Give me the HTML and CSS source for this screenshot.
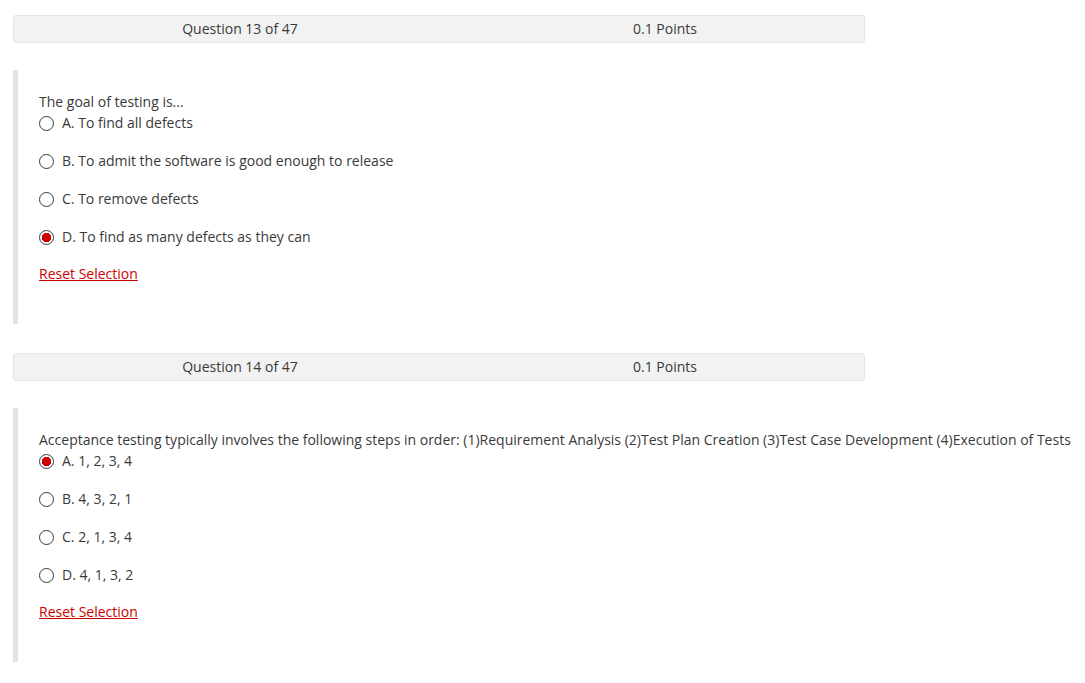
FILE: index.html
```html
<!DOCTYPE html>
<html>
<head>
<meta charset="utf-8">
<link rel="stylesheet" href="styles.css">
</head>
<body>
<div class="page">
  <div class="qhead">
    <div class="qnum">Question 13 of 47</div>
    <div class="qpts">0.1 Points</div>
  </div>
  <div class="qbody">
    <div class="qtext">The goal of testing is...</div>
    <div class="options">
      <label class="opt"><span class="radio"></span>A. To find all defects</label>
      <label class="opt"><span class="radio"></span>B. To admit the software is good enough to release</label>
      <label class="opt"><span class="radio"></span>C. To remove defects</label>
      <label class="opt"><span class="radio checked"></span>D. To find as many defects as they can</label>
    </div>
    <a class="reset" href="#">Reset Selection</a>
  </div>

  <div class="qhead second">
    <div class="qnum">Question 14 of 47</div>
    <div class="qpts">0.1 Points</div>
  </div>
  <div class="qbody">
    <div class="qtext">Acceptance testing typically involves the following steps in order: (1)Requirement Analysis (2)Test Plan Creation (3)Test Case Development (4)Execution of Tests</div>
    <div class="options">
      <label class="opt"><span class="radio checked"></span>A. 1, 2, 3, 4</label>
      <label class="opt"><span class="radio"></span>B. 4, 3, 2, 1</label>
      <label class="opt"><span class="radio"></span>C. 2, 1, 3, 4</label>
      <label class="opt"><span class="radio"></span>D. 4, 1, 3, 2</label>
    </div>
    <a class="reset" href="#">Reset Selection</a>
  </div>
</div>
</body>
</html>
```
FILE: styles.css
```css
html, body {
  margin: 0;
  padding: 0;
  background: #ffffff;
}
body {
  font-family: "Open Sans", "Liberation Sans", sans-serif;
  font-size: 14px;
  line-height: 20px;
  color: #3a3a3a;
}
.page {
  padding: 15px 0 0 13px;
}
.qhead {
  width: 850px;
  height: 26px;
  display: grid;
  grid-template-columns: 452px 1fr;
  align-items: center;
  background: #f2f2f2;
  border: 1px solid #e3e3e3;
  border-radius: 3px;
}
.qhead.second {
  margin-top: 29px;
}
.qnum, .qpts {
  text-align: center;
}
.qbody {
  margin-top: 27px;
  border-left: 5px solid #e3e3e3;
  padding: 22px 0 40px 21px;
  white-space: nowrap;
}
.qtext {
  line-height: 20px;
}
.options {
  display: flex;
  flex-direction: column;
  gap: 18px;
  margin-top: 1px;
}
.opt {
  display: flex;
  align-items: center;
  gap: 8px;
  height: 20px;
}
.radio {
  width: 15px;
  height: 15px;
  box-sizing: border-box;
  border: 1.5px solid #3a3a3a;
  border-radius: 50%;
  display: inline-block;
  flex: none;
  background: #fff;
}
.radio.checked {
  background: radial-gradient(circle, #cc0000 0 4.6px, #fff 5px);
}
.reset {
  display: inline-block;
  margin-top: 17px;
  color: #cc0000;
  text-decoration: underline;
}
```
